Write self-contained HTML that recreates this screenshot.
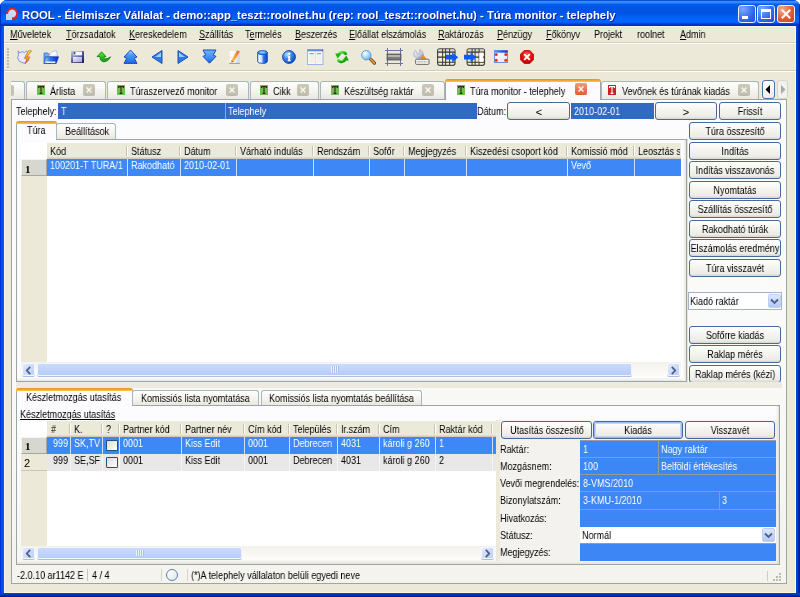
<!DOCTYPE html><html><head><meta charset="utf-8"><style>
*{box-sizing:border-box;margin:0;padding:0}
html,body{width:800px;height:597px;overflow:hidden;background:#fff}
body{font-family:"Liberation Sans",sans-serif;font-size:11px;color:#000;position:relative}
.a{position:absolute}
.t{position:absolute;white-space:nowrap;line-height:13px;transform-origin:0 0;will-change:transform}
.tcs{position:absolute;left:0;top:0;white-space:nowrap;line-height:13px;will-change:transform}
.btn{position:absolute;border:1px solid #47699C;border-radius:3px;background:linear-gradient(#FFFFFF 0,#F6F5F1 40%,#ECEBE5 85%,#D9D5C8 100%)}
.tab{position:absolute;border:1px solid #A8B6BE;border-bottom:none;border-radius:3px 3px 0 0;background:linear-gradient(#FFFFFF,#F3F2EC 60%,#E9E7DE)}
.tabA{position:absolute;border:1px solid #9CA6A8;border-bottom:none;border-top:none;border-radius:3px 3px 0 0;background:#FCFCFE}
.tabA:before{content:"";position:absolute;left:-1px;right:-1px;top:0;height:3px;background:linear-gradient(#E68B2C,#FFC73C);border-radius:3px 3px 0 0}
.w{color:#fff}
u{text-decoration:underline}
</style></head><body>
<div class="a" style="left:0;top:0;width:800px;height:597px;border-radius:7px 7px 0 0;overflow:hidden;background:linear-gradient(90deg,#0019CF 0,#0055E5 1px,#0055E5 3px,#0831D9 4px,#0831D9 796px,#0055E5 797px,#0032C0 798px,#001290 799px)">
<div class="a" style="left:0;top:0;width:800px;height:26px;background:linear-gradient(#0A4FD4 0px,#0A4FD4 1px,#3D93FF 1px,#2C84FA 3px,#0A5CEC 4px,#0057E6 6px,#0054E2 13px,#0062F6 17px,#0066FF 21px,#005CF4 23px,#0036C8 24px,#0030C0 26px)"></div>
<div class="a" style="left:0;top:26px;width:4px;height:571px;background:linear-gradient(90deg,#0010C8,#0048E0 1px,#0058EA 3px)"></div>
<div class="a" style="left:0;top:0;width:1px;height:26px;background:#0030C8"></div>
<div class="a" style="left:799px;top:0;width:1px;height:26px;background:#00209C"></div>
<div class="a" style="left:796px;top:26px;width:4px;height:571px;background:linear-gradient(90deg,#0050E0,#0034C8 2px,#00128C 4px)"></div>
<div class="a" style="left:0;top:593px;width:800px;height:4px;background:linear-gradient(#0048DC,#0030B8 2px,#00128C 4px)"></div>
</div>
<svg class="a" style="left:5px;top:7px" width="14" height="14" viewBox="0 0 14 14">
<circle cx="7" cy="6.5" r="4.6" fill="#CFDCF0"/>
<path d="M2.2 7.2 A5 5 0 1 1 7 11.6" fill="none" stroke="#E82020" stroke-width="2"/>
<rect x="1" y="7" width="6" height="6" fill="#C5D6F2"/>
</svg>
<div class="t" style="left:22px;top:8px;color:#fff;font-weight:bold;font-size:11.3px;line-height:15px;text-shadow:1px 1px 0 #0F1E8F;transform:none">ROOL - Élelmiszer Vállalat - demo::app_teszt::roolnet.hu (rep: rool_teszt::roolnet.hu) - Túra monitor - telephely</div>
<div class="a" style="left:738px;top:5px;width:18px;height:18px;border:1px solid #E8EEFA;border-radius:3px;background:radial-gradient(circle at 25% 20%,#7EA8FF,#2E68EE 60%,#1C50DA)"></div>
<div class="a" style="left:742px;top:16px;width:6px;height:3px;background:#fff"></div>
<div class="a" style="left:757px;top:5px;width:18px;height:18px;border:1px solid #E8EEFA;border-radius:3px;background:radial-gradient(circle at 25% 20%,#7EA8FF,#2E68EE 60%,#1C50DA)"></div>
<div class="a" style="left:761px;top:9px;width:10px;height:10px;border:1px solid #fff;border-top-width:3px"></div>
<div class="a" style="left:777px;top:5px;width:18px;height:18px;border:1px solid #F2F4FA;border-radius:3px;background:radial-gradient(circle at 25% 20%,#F4A888,#E2582E 60%,#D0441A)"></div>
<svg class="a" style="left:777px;top:5px" width="18" height="18"><path d="M4.8 4.8 L13.2 13.2 M13.2 4.8 L4.8 13.2" stroke="#fff" stroke-width="2"/></svg>
<div class="a" style="left:4px;top:26px;width:792px;height:567px;background:#ECE9D8;border:1px solid #FAF6E6"></div>
<div class="t" style="left:10px;top:27.69px;transform:scaleX(0.82);"><u>M</u>űveletek</div>
<div class="t" style="left:66px;top:27.69px;transform:scaleX(0.82);"><u>T</u>örzsadatok</div>
<div class="t" style="left:129px;top:27.69px;transform:scaleX(0.82);"><u>K</u>ereskedelem</div>
<div class="t" style="left:199px;top:27.69px;transform:scaleX(0.82);"><u>S</u>zállítás</div>
<div class="t" style="left:245px;top:27.69px;transform:scaleX(0.82);">T<u>e</u>rmelés</div>
<div class="t" style="left:295px;top:27.69px;transform:scaleX(0.82);"><u>B</u>eszerzés</div>
<div class="t" style="left:349px;top:27.69px;transform:scaleX(0.82);"><u>E</u>lőállat elszámolás</div>
<div class="t" style="left:438px;top:27.69px;transform:scaleX(0.82);"><u>R</u>aktározás</div>
<div class="t" style="left:497px;top:27.69px;transform:scaleX(0.82);"><u>P</u>énzügy</div>
<div class="t" style="left:546px;top:27.69px;transform:scaleX(0.82);"><u>F</u>őkönyv</div>
<div class="t" style="left:594px;top:27.69px;transform:scaleX(0.82);">Projekt</div>
<div class="t" style="left:637px;top:27.69px;transform:scaleX(0.82);">roolnet</div>
<div class="t" style="left:680px;top:27.69px;transform:scaleX(0.82);"><u>A</u>dmin</div>
<div class="a" style="left:4px;top:42px;width:792px;height:1px;background:#D4D0C0"></div>
<div class="a" style="left:4px;top:43px;width:792px;height:1px;background:#FFFFFF"></div>
<div class="a" style="left:7px;top:48px;width:2px;height:2px;background:#C1BDA8"></div>
<div class="a" style="left:7px;top:51px;width:2px;height:2px;background:#C1BDA8"></div>
<div class="a" style="left:7px;top:54px;width:2px;height:2px;background:#C1BDA8"></div>
<div class="a" style="left:7px;top:57px;width:2px;height:2px;background:#C1BDA8"></div>
<div class="a" style="left:7px;top:60px;width:2px;height:2px;background:#C1BDA8"></div>
<div class="a" style="left:7px;top:63px;width:2px;height:2px;background:#C1BDA8"></div>
<div class="a" style="left:7px;top:66px;width:2px;height:2px;background:#C1BDA8"></div>
<div class="a" style="left:4px;top:70px;width:792px;height:1px;background:#D0CCBC"></div>
<div class="a" style="left:4px;top:71px;width:792px;height:1px;background:#FFFFFF"></div>
<svg class="a" style="left:17px;top:50px" width="16" height="14" viewBox="0 0 16 14"><defs><linearGradient id="gl" x1="0" y1="0" x2="0" y2="1"><stop offset="0" stop-color="#FFE84A"/><stop offset=".5" stop-color="#F8A818"/><stop offset="1" stop-color="#E06010"/></linearGradient></defs><path d="M1.2 0.8 L2.6 3 L5.2 1.6 L7.6 2.8 L9.6 0.8 L10.8 3.8 L10.2 8 L12 10.2 L8.2 13.2 L5 12.6 L2 10.8 L0.6 7.8 L1.4 4.8 Z" fill="#E6EAFB" stroke="#7C8AD8" stroke-width=".9" stroke-linejoin="round"/><path d="M14.6 0.8 L10 6.6 L13 7.2 L8.2 13.8 L9.8 8.8 L7.4 8.3 L11.4 0.8 Z" fill="url(#gl)" stroke="#D0601A" stroke-width=".7" stroke-linejoin="round"/></svg>
<svg class="a" style="left:43px;top:50px" width="16" height="14" viewBox="0 0 16 14"><defs><linearGradient id="gfo" x1="0" y1="0" x2="1" y2="0"><stop offset="0" stop-color="#9CD0FF"/><stop offset=".45" stop-color="#2C74E8"/><stop offset="1" stop-color="#0624B8"/></linearGradient></defs><path d="M1 3 L5 3 L6 4.5 L8 4.5 L8 13.5 L1 13.5 Z" fill="#6CB0F4" stroke="#3A70D0" stroke-width=".8"/><path d="M5.5 6.5 L9 1.5 L13.5 0.8 L14.5 6 Z" fill="#FBFBFF" stroke="#A8A8D8" stroke-width=".7"/><path d="M2.5 6.8 L15.6 6.8 L13.2 13.5 L1 13.5 Z" fill="url(#gfo)" stroke="#1A40C0" stroke-width=".7"/><path d="M3 11.6 L12.6 11.6 L12.2 13 L2.4 13Z" fill="#E8F2FF"/></svg>
<svg class="a" style="left:71px;top:51px" width="13" height="12" viewBox="0 0 13 12"><defs><linearGradient id="gfl" x1="0" y1="0" x2="1" y2="1"><stop offset="0" stop-color="#C8CCF0"/><stop offset=".45" stop-color="#5A62A8"/><stop offset="1" stop-color="#10144A"/></linearGradient><linearGradient id="gfb" x1="0" y1="0" x2="1" y2="1"><stop offset="0" stop-color="#F2F0FF"/><stop offset="1" stop-color="#A0A0D2"/></linearGradient></defs><rect x="0" y="0" width="13" height="12" rx=".8" fill="url(#gfl)"/><rect x="2.4" y="0.6" width="8.6" height="3.8" fill="#F6F8FF"/><rect x="2.6" y="0.8" width="1.8" height="2.6" fill="#4A5498"/><rect x="2" y="5.8" width="9" height="5.4" fill="url(#gfb)"/></svg>
<svg class="a" style="left:96px;top:51px" width="16" height="12" viewBox="0 0 16 12"><defs><linearGradient id="ga" x1="0" y1="0" x2="0" y2="1"><stop offset="0" stop-color="#5CEB3C"/><stop offset="1" stop-color="#0E9A0A"/></linearGradient></defs><path d="M5.6 0.8 L10 5.6 L8 5.6 C8 8.6 11 8.4 14.5 5.8 C13.5 8.8 10.5 10.8 7.5 10.8 C5 10.6 4 8.2 4 5.6 L1 5.6 Z" fill="url(#ga)" stroke="#0B7A08" stroke-width=".8" stroke-linejoin="round"/></svg>
<svg class="a" style="left:123px;top:49px" width="15" height="15" viewBox="0 0 15 15"><defs><linearGradient id="gb" x1="0" y1="0" x2="0" y2="1"><stop offset="0" stop-color="#B8E0FF"/><stop offset=".35" stop-color="#4A9CF6"/><stop offset="1" stop-color="#1E66E0"/></linearGradient></defs><path d="M7.5 1 L14 8 L11.3 9.2 L14 14.4 L1 14.4 L3.7 9.2 L1 8 Z" fill="url(#gb)" stroke="#1A4CC0" stroke-width="1" stroke-linejoin="round"/></svg>
<svg class="a" style="left:151px;top:50px" width="12" height="14" viewBox="0 0 12 14"><path d="M11 0.5 L11 13.5 L1 7 Z" fill="#2F7AEB" stroke="#1C4FB8" stroke-linejoin="round"/><path d="M10 2.5 L10 7 L4 7 Z" fill="#9CCBFF"/></svg>
<svg class="a" style="left:177px;top:50px" width="12" height="14" viewBox="0 0 12 14"><path d="M1 0.5 L1 13.5 L11 7 Z" fill="#2F7AEB" stroke="#1C4FB8" stroke-linejoin="round"/><path d="M2 2.5 L2 7 L8 7 Z" fill="#9CCBFF"/></svg>
<svg class="a" style="left:202px;top:49px" width="15" height="15" viewBox="0 0 15 15"><defs><linearGradient id="gd" x1="0" y1="0" x2="0" y2="1"><stop offset="0" stop-color="#6CB4FF"/><stop offset=".6" stop-color="#3E8EF4"/><stop offset="1" stop-color="#1E5EDC"/></linearGradient></defs><path d="M1 1 L14 1 L11.3 6.2 L14 7.4 L7.5 14.2 L1 7.4 L3.7 6.2 Z" fill="url(#gd)" stroke="#1A4CC0" stroke-width="1" stroke-linejoin="round"/></svg>
<svg class="a" style="left:229px;top:50px" width="11" height="14" viewBox="0 0 11 14"><defs><linearGradient id="gpd" x1="0" y1="0" x2="1" y2="0"><stop offset="0" stop-color="#FFFFFF"/><stop offset=".5" stop-color="#F4F6FA"/><stop offset="1" stop-color="#C8CEDC"/></linearGradient><linearGradient id="gpp" x1="0" y1="0" x2="1" y2="0"><stop offset="0" stop-color="#FFD040"/><stop offset="1" stop-color="#F06010"/></linearGradient></defs><rect x="0.3" y="0.5" width="10.4" height="13" fill="url(#gpd)" stroke="#E2E4EC" stroke-width=".5"/><rect x="0.3" y="12.8" width="10.4" height="1.2" fill="#9CA2B0"/><path d="M8 0.4 L10.8 1.4 L4.8 11.4 L2.6 12.4 L2.4 10.2 Z" fill="url(#gpp)"/><path d="M2.4 10.2 L4.8 11.4 L2.6 12.4 Z" fill="#A06040"/></svg>
<svg class="a" style="left:257px;top:50px" width="11" height="14" viewBox="0 0 11 14"><defs><linearGradient id="gc" x1="0" y1="0" x2="1" y2="0"><stop offset="0" stop-color="#9CC8F8"/><stop offset=".2" stop-color="#F4FBFF"/><stop offset=".42" stop-color="#B8DEFA"/><stop offset=".62" stop-color="#2A70E2"/><stop offset="1" stop-color="#0C48C4"/></linearGradient></defs><path d="M0.6 2.6 V11.4 A4.9 2 0 0 0 10.4 11.4 V2.6 Z" fill="url(#gc)" stroke="#1E52BE" stroke-width=".9"/><ellipse cx="5.5" cy="2.6" rx="4.9" ry="2" fill="#3C8EF2" stroke="#1E52BE" stroke-width=".9"/><ellipse cx="5.2" cy="2.3" rx="3" ry="1" fill="#8CC4FF"/></svg>
<svg class="a" style="left:282px;top:50px" width="14" height="14" viewBox="0 0 14 14"><defs><radialGradient id="gi" cx=".35" cy=".3" r=".75"><stop offset="0" stop-color="#B8E0FF"/><stop offset=".45" stop-color="#3A8AF2"/><stop offset="1" stop-color="#0B48C0"/></radialGradient></defs><circle cx="7" cy="7" r="6.4" fill="url(#gi)" stroke="#0A3CA8" stroke-width=".9"/><circle cx="7.2" cy="3.7" r="1.2" fill="#fff"/><path d="M5.8 5.8 H8.2 V10.6 H9 V11.3 H5.4 V10.6 H6.2 V6.6 H5.8Z" fill="#fff"/></svg>
<svg class="a" style="left:307px;top:49px" width="17" height="16" viewBox="0 0 17 16"><rect x="0.5" y="0.5" width="15.5" height="15" fill="#FBFAF4" stroke="#9DB2E6" stroke-width="1"/><rect x="0.5" y="0.5" width="15.5" height="1.8" fill="#5C8AE2"/><rect x="15" y="0.5" width="1" height="1.8" fill="#B04070"/><path d="M8.2 2.5 V15" stroke="#DCD8CA" stroke-width="1"/><path d="M2.5 4.6 H6.8 M9.8 4.6 H14" stroke="#7EA2E6" stroke-width="1.2"/><rect x="2" y="6" width="5" height="8" fill="#F2F0E8"/><rect x="9.5" y="6" width="5" height="8" fill="#F2F0E8"/></svg>
<svg class="a" style="left:335px;top:50px" width="14" height="14" viewBox="0 0 14 14"><defs><linearGradient id="gr" x1="0" y1="0" x2="1" y2="1"><stop offset="0" stop-color="#7CF05C"/><stop offset=".5" stop-color="#22C018"/><stop offset="1" stop-color="#0A8A08"/></linearGradient></defs><path d="M11.2 4.8 C10 1.5 5.5 1 3.6 4.4" fill="none" stroke="url(#gr)" stroke-width="2.6"/><path d="M0.2 3.6 L6.6 3.6 L2.6 8.6 Z" fill="#1EB414"/><path d="M2.8 9.2 C4 12.5 8.5 13 10.4 9.6" fill="none" stroke="url(#gr)" stroke-width="2.6"/><path d="M13.8 10.4 L7.4 10.4 L11.4 5.4 Z" fill="#16A810"/></svg>
<svg class="a" style="left:361px;top:50px" width="15" height="15" viewBox="0 0 15 15"><defs><radialGradient id="gm" cx=".35" cy=".3" r=".7"><stop offset="0" stop-color="#FFFFFF"/><stop offset=".5" stop-color="#B6E2FF"/><stop offset="1" stop-color="#6EB4EE"/></radialGradient></defs><path d="M9.6 9.2 L13.4 13.2" stroke="#6A3A10" stroke-width="3.2" stroke-linecap="round"/><path d="M9.6 9.2 L13.4 13.2" stroke="#E89A3A" stroke-width="1.8" stroke-linecap="round"/><circle cx="5.3" cy="5.2" r="4.7" fill="url(#gm)" stroke="#5C9AD0" stroke-width=".9"/></svg>
<svg class="a" style="left:385px;top:48px" width="18" height="18" viewBox="0 0 18 18"><path d="M2.5 0 L2.5 18 M15.5 0 L15.5 18" stroke="#6A70B4" stroke-width="1"/><path d="M0 2.5 L18 2.5 M0 15.5 L18 15.5" stroke="#6A70B4"/><rect x="2" y="6" width="14" height="6" fill="#7C7C7C" stroke="#333" stroke-width=".6"/><rect x="3" y="7" width="12" height="2" fill="#B4B4B4"/></svg>
<svg class="a" style="left:413px;top:49px" width="17" height="16" viewBox="0 0 17 16"><defs><linearGradient id="gwr" x1="0" y1="0" x2="1" y2="1"><stop offset="0" stop-color="#FFFFFF"/><stop offset=".6" stop-color="#C8CCE4"/><stop offset="1" stop-color="#7078B0"/></linearGradient></defs><path d="M2.6 1.4 C0.4 2.8 0.2 6.4 2.2 8.2 C3.8 9.6 6.4 9.6 8 8.6 L9.6 9.6 L10.2 7.2 C10.6 4.2 9.4 1.6 6.8 0.6 L6.8 3.2 C6.6 4.8 5 5.4 3.8 4.4 Z" fill="url(#gwr)" stroke="#8C92C0" stroke-width=".6"/><path d="M6.6 10.2 L10.2 5.6 L13.6 10.2 Z" fill="#F49010"/><rect x="2.6" y="10.2" width="13.4" height="5.2" rx="1" fill="#F2F2F0" stroke="#6A6A6A" stroke-width="1"/><path d="M4.4 12.8 H14.2" stroke="#909090" stroke-width="1" stroke-dasharray="1 .6"/></svg>
<svg class="a" style="left:437px;top:48px" width="23" height="18" viewBox="0 0 23 18"><rect x="0.6" y="0.9" width="17.4" height="16.4" rx="2" fill="#F4EDCF" stroke="#4A4A48" stroke-width="1.2"/><rect x="1.2" y="1.5" width="16.2" height="2.6" fill="#DEDCD2"/><path d="M0.6 4.1 H18 M0.6 9.1 H18 M0.6 14.2 H18" stroke="#2E2E2E" stroke-width="1.1"/><path d="M5.6 1 V17 M8.6 1 V17 M12.6 1 V17" stroke="#3A3A3A" stroke-width="1"/><path d="M8.9 6.8 L15.2 6.8 L15.2 4.6 L21.2 9.3 L15.2 14.4 L15.2 11.6 L8.9 11.6 Z" fill="#0A5CFA"/></svg>
<svg class="a" style="left:464px;top:48px" width="23" height="18" viewBox="0 0 23 18"><rect x="3.1" y="0.9" width="17.4" height="16.4" rx="2" fill="#F4EDCF" stroke="#4A4A48" stroke-width="1.2"/><rect x="3.7" y="1.5" width="16.2" height="2.6" fill="#DEDCD2"/><path d="M3.1 4.1 H20.5 M3.1 9.1 H20.5 M3.1 14.2 H20.5" stroke="#2E2E2E" stroke-width="1.1"/><path d="M8.1 1 V17 M11.1 1 V17 M15.1 1 V17" stroke="#3A3A3A" stroke-width="1"/><rect x="15.3" y="4.6" width="3.8" height="9.2" fill="#FFFFFF"/><path d="M0 6.8 L6.6 6.8 L6.6 4.6 L12.2 9.3 L6.6 14.4 L6.6 11.6 L0 11.6 Z" fill="#0A5CFA"/></svg>
<svg class="a" style="left:494px;top:50px" width="14" height="13" viewBox="0 0 14 13"><defs><linearGradient id="gf" x1="0" y1="0" x2="1" y2="0"><stop offset="0" stop-color="#5C9CF4"/><stop offset="1" stop-color="#0A2ED8"/></linearGradient><linearGradient id="gw" x1="0" y1="0" x2="1" y2="1"><stop offset="0" stop-color="#FFFFFF"/><stop offset="1" stop-color="#DDE6F6"/></linearGradient></defs><rect x="0.5" y="0.5" width="13" height="12" fill="url(#gw)" stroke="#6A92D8"/><rect x="0.5" y="0.5" width="13" height="2.2" fill="url(#gf)"/><circle cx="2.2" cy="4.6" r="1.5" fill="#F0300A"/><circle cx="11.8" cy="4.6" r="1.5" fill="#F0300A"/><circle cx="2.2" cy="10.2" r="1.5" fill="#F0300A"/><circle cx="11.8" cy="10.2" r="1.5" fill="#F0300A"/></svg>
<svg class="a" style="left:520px;top:50px" width="14" height="14" viewBox="0 0 14 14"><defs><radialGradient id="gs" cx=".5" cy=".35" r=".7"><stop offset="0" stop-color="#FF7070"/><stop offset=".5" stop-color="#E81010"/><stop offset="1" stop-color="#B00000"/></radialGradient></defs><path d="M4.2 0.5 L9.8 0.5 L13.5 4.2 L13.5 9.8 L9.8 13.5 L4.2 13.5 L0.5 9.8 L0.5 4.2 Z" fill="url(#gs)" stroke="#B80A0A" stroke-width=".8"/><path d="M4.2 4.2 L9.8 9.8 M9.8 4.2 L4.2 9.8" stroke="#fff" stroke-width="1.9"/></svg>
<div class="a" style="left:11px;top:81px;width:14px;height:18px;border:1px solid #A8B6BE;border-left:none;border-bottom:none;border-radius:0 3px 0 0;background:linear-gradient(#FFFFFF,#F3F2EC 60%,#E9E7DE)"></div>
<div class="a" style="left:11px;top:85px;width:3px;height:11px;background:#C6C3B6;border-radius:0 2px 2px 0"></div>
<div class="tab" style="left:26px;top:81px;width:80px;height:18px"></div>
<svg class="a" style="left:37px;top:85px" width="8" height="10"><rect x="0" y="0" width="8" height="10" fill="#6CC050"/><path d="M1.5 1.6 H6.5 V3 M1.5 1.6 V3 M4 1.6 V8.4 M2.6 8.4 H5.4" stroke="#3A2418" stroke-width="1.1" fill="none"/></svg>
<div class="t" style="left:50px;top:84.69px;transform:scaleX(0.82);">Árlista</div>
<div class="a" style="left:83px;top:84px;width:12px;height:12px;border-radius:2px;background:linear-gradient(#CDC9BA,#BFBBAC)"></div>
<svg class="a" style="left:83px;top:84px" width="12" height="12"><path d="M3.6 3.6 L8.4 8.4 M8.4 3.6 L3.6 8.4" stroke="#FAF8F0" stroke-width="1.4"/></svg>
<div class="tab" style="left:107px;top:81px;width:142px;height:18px"></div>
<svg class="a" style="left:117px;top:85px" width="8" height="10"><rect x="0" y="0" width="8" height="10" fill="#6CC050"/><path d="M1.5 1.6 H6.5 V3 M1.5 1.6 V3 M4 1.6 V8.4 M2.6 8.4 H5.4" stroke="#3A2418" stroke-width="1.1" fill="none"/></svg>
<div class="t" style="left:130px;top:84.69px;transform:scaleX(0.82);">Túraszervező monitor</div>
<div class="a" style="left:226px;top:84px;width:12px;height:12px;border-radius:2px;background:linear-gradient(#CDC9BA,#BFBBAC)"></div>
<svg class="a" style="left:226px;top:84px" width="12" height="12"><path d="M3.6 3.6 L8.4 8.4 M8.4 3.6 L3.6 8.4" stroke="#FAF8F0" stroke-width="1.4"/></svg>
<div class="tab" style="left:250px;top:81px;width:69px;height:18px"></div>
<svg class="a" style="left:260px;top:85px" width="8" height="10"><rect x="0" y="0" width="8" height="10" fill="#6CC050"/><path d="M1.5 1.6 H6.5 V3 M1.5 1.6 V3 M4 1.6 V8.4 M2.6 8.4 H5.4" stroke="#3A2418" stroke-width="1.1" fill="none"/></svg>
<div class="t" style="left:273px;top:84.69px;transform:scaleX(0.82);">Cikk</div>
<div class="a" style="left:297px;top:84px;width:12px;height:12px;border-radius:2px;background:linear-gradient(#CDC9BA,#BFBBAC)"></div>
<svg class="a" style="left:297px;top:84px" width="12" height="12"><path d="M3.6 3.6 L8.4 8.4 M8.4 3.6 L3.6 8.4" stroke="#FAF8F0" stroke-width="1.4"/></svg>
<div class="tab" style="left:320px;top:81px;width:125px;height:18px"></div>
<svg class="a" style="left:331px;top:85px" width="8" height="10"><rect x="0" y="0" width="8" height="10" fill="#6CC050"/><path d="M1.5 1.6 H6.5 V3 M1.5 1.6 V3 M4 1.6 V8.4 M2.6 8.4 H5.4" stroke="#3A2418" stroke-width="1.1" fill="none"/></svg>
<div class="t" style="left:344px;top:84.69px;transform:scaleX(0.82);">Készültség raktár</div>
<div class="a" style="left:422px;top:84px;width:12px;height:12px;border-radius:2px;background:linear-gradient(#CDC9BA,#BFBBAC)"></div>
<svg class="a" style="left:422px;top:84px" width="12" height="12"><path d="M3.6 3.6 L8.4 8.4 M8.4 3.6 L3.6 8.4" stroke="#FAF8F0" stroke-width="1.4"/></svg>
<div class="tab" style="left:601px;top:81px;width:158px;height:18px"></div>
<svg class="a" style="left:608px;top:85px" width="8" height="10"><rect x="0" y="0" width="8" height="10" fill="#C42424"/><path d="M1.5 1.6 H6.5 V3 M1.5 1.6 V3 M4 1.6 V8.4 M2.6 8.4 H5.4" stroke="#FFFFFF" stroke-width="1.1" fill="none"/></svg>
<div class="t" style="left:622px;top:84.69px;transform:scaleX(0.82);">Vevőnek és túrának kiadás</div>
<div class="a" style="left:738px;top:84px;width:12px;height:12px;border-radius:2px;background:linear-gradient(#CDC9BA,#BFBBAC)"></div>
<svg class="a" style="left:738px;top:84px" width="12" height="12"><path d="M3.6 3.6 L8.4 8.4 M8.4 3.6 L3.6 8.4" stroke="#FAF8F0" stroke-width="1.4"/></svg>
<div class="a" style="left:11px;top:99px;width:776px;height:485px;border:1px solid #9CA6A8;border-top-color:#9CA6A8;background:linear-gradient(#FCFCFE 0,#FAFAF8 50%,#F4F3EE 100%)"></div>
<div class="tabA" style="left:445px;top:79px;width:156px;height:21px"></div>
<svg class="a" style="left:457px;top:85px" width="8" height="10"><rect x="0" y="0" width="8" height="10" fill="#6CC050"/><path d="M1.5 1.6 H6.5 V3 M1.5 1.6 V3 M4 1.6 V8.4 M2.6 8.4 H5.4" stroke="#3A2418" stroke-width="1.1" fill="none"/></svg>
<div class="t" style="left:470px;top:84.69px;transform:scaleX(0.82);">Túra monitor - telephely</div>
<div class="a" style="left:575px;top:83px;width:12px;height:12px;border-radius:2px;background:linear-gradient(#F29A7C,#E25A34)"></div>
<svg class="a" style="left:575px;top:83px" width="12" height="12"><path d="M3.6 3.6 L8.4 8.4 M8.4 3.6 L3.6 8.4" stroke="#FAF8F0" stroke-width="1.4"/></svg>
<div class="a" style="left:762px;top:80px;width:13px;height:19px;border:1px solid #4A72AA;border-radius:3px;background:linear-gradient(#FFFFFF,#EDEBE3)"></div>
<svg class="a" style="left:765px;top:85px" width="6" height="9" viewBox="0 0 6 9"><path d="M5 0 L5 9 L0.5 4.5Z" fill="#000"/></svg>
<div class="a" style="left:777px;top:80px;width:11px;height:19px;border:1px solid #D6D4CC;border-radius:3px;background:#F2F1EC"></div>
<svg class="a" style="left:780px;top:85px" width="6" height="9" viewBox="0 0 6 9"><path d="M1 0 L1 9 L5.5 4.5Z" fill="#A8A7A0"/></svg>
<div class="t" style="left:16px;top:104.69px;transform:scaleX(0.82);">Telephely:</div>
<div class="a" style="left:58px;top:103px;width:419px;height:16px;background:#316AC5"></div>
<div class="a" style="left:225px;top:103px;width:1px;height:16px;background:#8DA9D8"></div>
<div class="t w" style="left:61px;top:104.69px;transform:scaleX(0.82);">T</div>
<div class="t w" style="left:228px;top:104.69px;transform:scaleX(0.82);">Telephely</div>
<div class="t" style="left:477px;top:104.69px;transform:scaleX(0.82);">Dátum:</div>
<div class="btn" style="left:507px;top:102px;width:63px;height:18px"></div>
<div class="a" style="left:538.5px;top:105.69px;width:0;height:13px;"><span class="tcs" style="transform:translateX(-50%) scaleX(1)">&lt;</span></div>
<div class="a" style="left:571px;top:103px;width:83px;height:16px;background:#316AC5"></div>
<div class="t w" style="left:574px;top:104.69px;transform:scaleX(0.82);">2010-02-01</div>
<div class="btn" style="left:655px;top:102px;width:62px;height:18px"></div>
<div class="a" style="left:686.0px;top:105.69px;width:0;height:13px;"><span class="tcs" style="transform:translateX(-50%) scaleX(1)">&gt;</span></div>
<div class="btn" style="left:719px;top:102px;width:62px;height:18px"></div>
<div class="a" style="left:750.0px;top:104.69px;width:0;height:13px;"><span class="tcs" style="transform:translateX(-50%) scaleX(0.82)">Frissít</span></div>
<div class="a" style="left:16px;top:139px;width:671px;height:243px;border:1px solid #9CA6A8;background:#FCFCFE"></div>
<div class="a" style="left:683px;top:140px;width:3px;height:241px;background:linear-gradient(90deg,rgba(236,233,216,0),#E6E4DA)"></div>
<div class="a" style="left:17px;top:378px;width:666px;height:3px;background:linear-gradient(rgba(236,233,216,0),#E6E4DA)"></div>
<div class="a" style="left:687px;top:139px;width:1px;height:243px;background:#E6E2D2"></div>
<div class="tabA" style="left:16px;top:121px;width:41px;height:19px"></div>
<div class="t" style="left:27px;top:123.69px;transform:scaleX(0.82);">Túra</div>
<div class="tab" style="left:56px;top:123px;width:60px;height:16px"></div>
<div class="t" style="left:65px;top:124.69px;transform:scaleX(0.82);">Beállítások</div>
<div class="a" style="left:21px;top:143px;width:660px;height:219px;background:#FFFFFF"></div>
<div class="a" style="left:47px;top:143px;width:634px;height:14px;background:#EBEAD9"></div>
<div class="a" style="left:47px;top:157px;width:634px;height:1px;background:#E0DCCB"></div>
<div class="a" style="left:47px;top:158px;width:634px;height:1px;background:#D2CEBC"></div>
<div class="a" style="left:47px;top:143px;width:79px;height:15px;overflow:hidden"><div class="t" style="left:3px;top:1.69px;transform:scaleX(0.82)">Kód</div></div>
<div class="a" style="left:126px;top:146px;width:1px;height:10px;background:#C7C5B2"></div>
<div class="a" style="left:127px;top:146px;width:1px;height:10px;background:#FFFFFF"></div>
<div class="a" style="left:127px;top:143px;width:52px;height:15px;overflow:hidden"><div class="t" style="left:4px;top:1.69px;transform:scaleX(0.82)">Státusz</div></div>
<div class="a" style="left:179px;top:146px;width:1px;height:10px;background:#C7C5B2"></div>
<div class="a" style="left:180px;top:146px;width:1px;height:10px;background:#FFFFFF"></div>
<div class="a" style="left:180px;top:143px;width:55px;height:15px;overflow:hidden"><div class="t" style="left:4px;top:1.69px;transform:scaleX(0.82)">Dátum</div></div>
<div class="a" style="left:235px;top:146px;width:1px;height:10px;background:#C7C5B2"></div>
<div class="a" style="left:236px;top:146px;width:1px;height:10px;background:#FFFFFF"></div>
<div class="a" style="left:236px;top:143px;width:76px;height:15px;overflow:hidden"><div class="t" style="left:4px;top:1.69px;transform:scaleX(0.82)">Várható indulás</div></div>
<div class="a" style="left:312px;top:146px;width:1px;height:10px;background:#C7C5B2"></div>
<div class="a" style="left:313px;top:146px;width:1px;height:10px;background:#FFFFFF"></div>
<div class="a" style="left:313px;top:143px;width:55px;height:15px;overflow:hidden"><div class="t" style="left:4px;top:1.69px;transform:scaleX(0.82)">Rendszám</div></div>
<div class="a" style="left:368px;top:146px;width:1px;height:10px;background:#C7C5B2"></div>
<div class="a" style="left:369px;top:146px;width:1px;height:10px;background:#FFFFFF"></div>
<div class="a" style="left:369px;top:143px;width:34px;height:15px;overflow:hidden"><div class="t" style="left:4px;top:1.69px;transform:scaleX(0.82)">Sofőr</div></div>
<div class="a" style="left:403px;top:146px;width:1px;height:10px;background:#C7C5B2"></div>
<div class="a" style="left:404px;top:146px;width:1px;height:10px;background:#FFFFFF"></div>
<div class="a" style="left:404px;top:143px;width:61px;height:15px;overflow:hidden"><div class="t" style="left:4px;top:1.69px;transform:scaleX(0.82)">Megjegyzés</div></div>
<div class="a" style="left:465px;top:146px;width:1px;height:10px;background:#C7C5B2"></div>
<div class="a" style="left:466px;top:146px;width:1px;height:10px;background:#FFFFFF"></div>
<div class="a" style="left:466px;top:143px;width:100px;height:15px;overflow:hidden"><div class="t" style="left:4px;top:1.69px;transform:scaleX(0.82)">Kiszedési csoport kód</div></div>
<div class="a" style="left:566px;top:146px;width:1px;height:10px;background:#C7C5B2"></div>
<div class="a" style="left:567px;top:146px;width:1px;height:10px;background:#FFFFFF"></div>
<div class="a" style="left:567px;top:143px;width:66px;height:15px;overflow:hidden"><div class="t" style="left:4px;top:1.69px;transform:scaleX(0.82)">Komissió mód</div></div>
<div class="a" style="left:633px;top:146px;width:1px;height:10px;background:#C7C5B2"></div>
<div class="a" style="left:634px;top:146px;width:1px;height:10px;background:#FFFFFF"></div>
<div class="a" style="left:634px;top:143px;width:46px;height:15px;overflow:hidden"><div class="t" style="left:4px;top:1.69px;transform:scaleX(0.82)">Leosztás s</div></div>
<div class="a" style="left:47px;top:159px;width:634px;height:17px;background:#3D88F6"></div>
<div class="a" style="left:127px;top:159px;width:1px;height:17px;background:#CFE0FA"></div>
<div class="a" style="left:180px;top:159px;width:1px;height:17px;background:#CFE0FA"></div>
<div class="a" style="left:236px;top:159px;width:1px;height:17px;background:#CFE0FA"></div>
<div class="a" style="left:313px;top:159px;width:1px;height:17px;background:#CFE0FA"></div>
<div class="a" style="left:369px;top:159px;width:1px;height:17px;background:#CFE0FA"></div>
<div class="a" style="left:404px;top:159px;width:1px;height:17px;background:#CFE0FA"></div>
<div class="a" style="left:466px;top:159px;width:1px;height:17px;background:#CFE0FA"></div>
<div class="a" style="left:567px;top:159px;width:1px;height:17px;background:#CFE0FA"></div>
<div class="a" style="left:634px;top:159px;width:1px;height:17px;background:#CFE0FA"></div>
<div class="t w" style="left:50px;top:158.69px;transform:scaleX(0.82);">100201-T TURA/1</div>
<div class="t w" style="left:130.5px;top:158.69px;transform:scaleX(0.82);">Rakodható</div>
<div class="t w" style="left:183.5px;top:158.69px;transform:scaleX(0.82);">2010-02-01</div>
<div class="t w" style="left:570.5px;top:158.69px;transform:scaleX(0.82);">Vevő</div>
<div class="a" style="left:21px;top:176px;width:26px;height:186px;background:#ECE9D8"></div>
<div class="a" style="left:21px;top:159px;width:26px;height:17px;background:#D8D7CF;border:1px solid #F4F3EE;border-right-color:#A9A79C;border-bottom-color:#A9A79C"></div>
<div class="a" style="left:25px;top:162px;font-family:&quot;Liberation Serif&quot;,serif;font-weight:bold;font-size:11px;line-height:14px;will-change:transform">1</div>
<div class="a" style="left:21px;top:362px;width:660px;height:15px;background:linear-gradient(#F3F1EA,#FDFDFA)"></div>
<div class="a" style="left:22px;top:363px;width:13px;height:13px;border-radius:2px;background:linear-gradient(135deg,#E2EBFE,#B9CDF8);border:1px solid #F6F8FE;box-shadow:0 1px 0 #A8BDE8"></div>
<svg class="a" style="left:25px;top:366px" width="7" height="9" viewBox="0 0 7 9"><path d="M5.2 0.8 L1.8 4.5 L5.2 8.2" fill="none" stroke="#4D6185" stroke-width="1.8"/></svg>
<div class="a" style="left:37px;top:363px;width:595px;height:13px;border-radius:2px;background:linear-gradient(#CCDBFC,#B6CCF8);border:1px solid #F2F5FE;box-shadow:0 1px 0 #A8BDE8"></div>
<div class="a" style="left:331px;top:366px;width:1px;height:7px;background:#EEF4FE"></div>
<div class="a" style="left:332px;top:366px;width:1px;height:7px;background:#A9C0EE"></div>
<div class="a" style="left:333px;top:366px;width:1px;height:7px;background:#EEF4FE"></div>
<div class="a" style="left:334px;top:366px;width:1px;height:7px;background:#A9C0EE"></div>
<div class="a" style="left:335px;top:366px;width:1px;height:7px;background:#EEF4FE"></div>
<div class="a" style="left:336px;top:366px;width:1px;height:7px;background:#A9C0EE"></div>
<div class="a" style="left:337px;top:366px;width:1px;height:7px;background:#EEF4FE"></div>
<div class="a" style="left:338px;top:366px;width:1px;height:7px;background:#A9C0EE"></div>
<div class="a" style="left:667px;top:363px;width:13px;height:13px;border-radius:2px;background:linear-gradient(135deg,#E2EBFE,#B9CDF8);border:1px solid #F6F8FE;box-shadow:0 1px 0 #A8BDE8"></div>
<svg class="a" style="left:670px;top:366px" width="7" height="9" viewBox="0 0 7 9"><path d="M1.8 0.8 L5.2 4.5 L1.8 8.2" fill="none" stroke="#4D6185" stroke-width="1.8"/></svg>
<div class="btn" style="left:689px;top:122px;width:92px;height:18px"></div>
<div class="a" style="left:735.0px;top:124.69px;width:0;height:13px;"><span class="tcs" style="transform:translateX(-50%) scaleX(0.82)">Túra összesítő</span></div>
<div class="btn" style="left:689px;top:142px;width:92px;height:18px"></div>
<div class="a" style="left:735.0px;top:144.69px;width:0;height:13px;"><span class="tcs" style="transform:translateX(-50%) scaleX(0.82)">Indítás</span></div>
<div class="btn" style="left:689px;top:161px;width:92px;height:18px"></div>
<div class="a" style="left:735.0px;top:163.69px;width:0;height:13px;"><span class="tcs" style="transform:translateX(-50%) scaleX(0.82)">Indítás visszavonás</span></div>
<div class="btn" style="left:689px;top:181px;width:92px;height:18px"></div>
<div class="a" style="left:735.0px;top:183.69px;width:0;height:13px;"><span class="tcs" style="transform:translateX(-50%) scaleX(0.82)">Nyomtatás</span></div>
<div class="btn" style="left:689px;top:200px;width:92px;height:18px"></div>
<div class="a" style="left:735.0px;top:202.69px;width:0;height:13px;"><span class="tcs" style="transform:translateX(-50%) scaleX(0.82)">Szállítás összesítő</span></div>
<div class="btn" style="left:689px;top:220px;width:92px;height:18px"></div>
<div class="a" style="left:735.0px;top:222.69px;width:0;height:13px;"><span class="tcs" style="transform:translateX(-50%) scaleX(0.82)">Rakodható túrák</span></div>
<div class="btn" style="left:689px;top:239px;width:92px;height:18px"></div>
<div class="a" style="left:735.0px;top:241.69px;width:0;height:13px;"><span class="tcs" style="transform:translateX(-50%) scaleX(0.82)">Elszámolás eredmény</span></div>
<div class="btn" style="left:689px;top:259px;width:92px;height:18px"></div>
<div class="a" style="left:735.0px;top:261.69px;width:0;height:13px;"><span class="tcs" style="transform:translateX(-50%) scaleX(0.82)">Túra visszavét</span></div>
<div class="btn" style="left:689px;top:326px;width:92px;height:18px"></div>
<div class="a" style="left:735.0px;top:328.69px;width:0;height:13px;"><span class="tcs" style="transform:translateX(-50%) scaleX(0.82)">Sofőrre kiadás</span></div>
<div class="btn" style="left:689px;top:345px;width:92px;height:18px"></div>
<div class="a" style="left:735.0px;top:347.69px;width:0;height:13px;"><span class="tcs" style="transform:translateX(-50%) scaleX(0.82)">Raklap mérés</span></div>
<div class="btn" style="left:689px;top:365px;width:92px;height:18px"></div>
<div class="a" style="left:735.0px;top:367.69px;width:0;height:13px;"><span class="tcs" style="transform:translateX(-50%) scaleX(0.82)">Raklap mérés (kézi)</span></div>
<div class="a" style="left:688px;top:292px;width:94px;height:18px;background:#fff;border:1px solid #A2B4C8"></div>
<div class="t" style="left:690px;top:294.69px;transform:scaleX(0.82);">Kiadó raktár</div>
<div class="a" style="left:768px;top:294px;width:13px;height:14px;border-radius:2px;background:linear-gradient(#DCE6FC,#B4C8F6);border:1px solid #BCD0F6"></div>
<svg class="a" style="left:770px;top:298px" width="9" height="7" viewBox="0 0 9 7"><path d="M1 1.5 L4.5 5 L8 1.5" fill="none" stroke="#4D6185" stroke-width="1.8"/></svg>
<div class="a" style="left:16px;top:382px;width:766px;height:6px;background:#EDEADF"></div>
<div class="a" style="left:16px;top:405px;width:764px;height:160px;border:1px solid #9CA6A8;background:linear-gradient(#FCFCFE,#F6F6F2)"></div>
<div class="tabA" style="left:16px;top:388px;width:117px;height:18px"></div>
<div class="t" style="left:26px;top:390.69px;transform:scaleX(0.82);">Készletmozgás utasítás</div>
<div class="tab" style="left:132px;top:390px;width:127px;height:15px"></div>
<div class="t" style="left:141px;top:391.69px;transform:scaleX(0.82);">Komissiós lista nyomtatása</div>
<div class="tab" style="left:261px;top:390px;width:161px;height:15px"></div>
<div class="t" style="left:269px;top:391.69px;transform:scaleX(0.82);">Komissiós lista nyomtatás beállítása</div>
<div class="t" style="left:20px;top:407.69px;transform:scaleX(0.82);"><u>Készletmozgás utasítás</u></div>
<div class="a" style="left:21px;top:421px;width:475px;height:125px;background:#FFFFFF"></div>
<div class="a" style="left:47px;top:421px;width:449px;height:14px;background:#EBEAD9"></div>
<div class="a" style="left:47px;top:435px;width:449px;height:1px;background:#E0DCCB"></div>
<div class="a" style="left:47px;top:436px;width:449px;height:1px;background:#D2CEBC"></div>
<div class="t" style="left:50.5px;top:422.69px;transform:scaleX(0.82);">#</div>
<div class="a" style="left:69px;top:424px;width:1px;height:10px;background:#C7C5B2"></div>
<div class="a" style="left:70px;top:424px;width:1px;height:10px;background:#FFFFFF"></div>
<div class="t" style="left:74px;top:422.69px;transform:scaleX(0.82);">K.</div>
<div class="a" style="left:101px;top:424px;width:1px;height:10px;background:#C7C5B2"></div>
<div class="a" style="left:102px;top:424px;width:1px;height:10px;background:#FFFFFF"></div>
<div class="t" style="left:106px;top:422.69px;transform:scaleX(0.82);">?</div>
<div class="a" style="left:118px;top:424px;width:1px;height:10px;background:#C7C5B2"></div>
<div class="a" style="left:119px;top:424px;width:1px;height:10px;background:#FFFFFF"></div>
<div class="t" style="left:123px;top:422.69px;transform:scaleX(0.82);">Partner kód</div>
<div class="a" style="left:180px;top:424px;width:1px;height:10px;background:#C7C5B2"></div>
<div class="a" style="left:181px;top:424px;width:1px;height:10px;background:#FFFFFF"></div>
<div class="t" style="left:185px;top:422.69px;transform:scaleX(0.82);">Partner név</div>
<div class="a" style="left:243px;top:424px;width:1px;height:10px;background:#C7C5B2"></div>
<div class="a" style="left:244px;top:424px;width:1px;height:10px;background:#FFFFFF"></div>
<div class="t" style="left:248px;top:422.69px;transform:scaleX(0.82);">Cím kód</div>
<div class="a" style="left:288px;top:424px;width:1px;height:10px;background:#C7C5B2"></div>
<div class="a" style="left:289px;top:424px;width:1px;height:10px;background:#FFFFFF"></div>
<div class="t" style="left:293px;top:422.69px;transform:scaleX(0.82);">Település</div>
<div class="a" style="left:336px;top:424px;width:1px;height:10px;background:#C7C5B2"></div>
<div class="a" style="left:337px;top:424px;width:1px;height:10px;background:#FFFFFF"></div>
<div class="t" style="left:341px;top:422.69px;transform:scaleX(0.82);">Ir.szám</div>
<div class="a" style="left:378px;top:424px;width:1px;height:10px;background:#C7C5B2"></div>
<div class="a" style="left:379px;top:424px;width:1px;height:10px;background:#FFFFFF"></div>
<div class="t" style="left:383px;top:422.69px;transform:scaleX(0.82);">Cím</div>
<div class="a" style="left:434px;top:424px;width:1px;height:10px;background:#C7C5B2"></div>
<div class="a" style="left:435px;top:424px;width:1px;height:10px;background:#FFFFFF"></div>
<div class="t" style="left:439px;top:422.69px;transform:scaleX(0.82);">Raktár kód</div>
<div class="a" style="left:491px;top:424px;width:1px;height:10px;background:#C7C5B2"></div>
<div class="a" style="left:492px;top:424px;width:1px;height:10px;background:#FFFFFF"></div>
<div class="a" style="left:47px;top:437px;width:449px;height:17px;background:#3D88F6"></div>
<div class="a" style="left:47px;top:454px;width:449px;height:17px;background:#E8E8E8"></div>
<div class="a" style="left:70px;top:437px;width:1px;height:17px;background:#CFE0FA"></div>
<div class="a" style="left:70px;top:454px;width:1px;height:17px;background:#F6F6F6"></div>
<div class="a" style="left:102px;top:437px;width:1px;height:17px;background:#CFE0FA"></div>
<div class="a" style="left:102px;top:454px;width:1px;height:17px;background:#F6F6F6"></div>
<div class="a" style="left:119px;top:437px;width:1px;height:17px;background:#CFE0FA"></div>
<div class="a" style="left:119px;top:454px;width:1px;height:17px;background:#F6F6F6"></div>
<div class="a" style="left:181px;top:437px;width:1px;height:17px;background:#CFE0FA"></div>
<div class="a" style="left:181px;top:454px;width:1px;height:17px;background:#F6F6F6"></div>
<div class="a" style="left:244px;top:437px;width:1px;height:17px;background:#CFE0FA"></div>
<div class="a" style="left:244px;top:454px;width:1px;height:17px;background:#F6F6F6"></div>
<div class="a" style="left:289px;top:437px;width:1px;height:17px;background:#CFE0FA"></div>
<div class="a" style="left:289px;top:454px;width:1px;height:17px;background:#F6F6F6"></div>
<div class="a" style="left:337px;top:437px;width:1px;height:17px;background:#CFE0FA"></div>
<div class="a" style="left:337px;top:454px;width:1px;height:17px;background:#F6F6F6"></div>
<div class="a" style="left:379px;top:437px;width:1px;height:17px;background:#CFE0FA"></div>
<div class="a" style="left:379px;top:454px;width:1px;height:17px;background:#F6F6F6"></div>
<div class="a" style="left:435px;top:437px;width:1px;height:17px;background:#CFE0FA"></div>
<div class="a" style="left:435px;top:454px;width:1px;height:17px;background:#F6F6F6"></div>
<div class="a" style="left:492px;top:437px;width:1px;height:17px;background:#CFE0FA"></div>
<div class="a" style="left:492px;top:454px;width:1px;height:17px;background:#F6F6F6"></div>
<div class="t w" style="left:73.5px;top:436.69px;transform:scaleX(0.82);">SK,TV</div>
<div class="t w" style="left:122.5px;top:436.69px;transform:scaleX(0.82);">0001</div>
<div class="t w" style="left:184.5px;top:436.69px;transform:scaleX(0.82);">Kiss Edit</div>
<div class="t w" style="left:247.5px;top:436.69px;transform:scaleX(0.82);">0001</div>
<div class="t w" style="left:292.5px;top:436.69px;transform:scaleX(0.82);">Debrecen</div>
<div class="t w" style="left:340.5px;top:436.69px;transform:scaleX(0.82);">4031</div>
<div class="t w" style="left:382.5px;top:436.69px;transform:scaleX(0.82);">károli g 260</div>
<div class="t w" style="left:438.5px;top:436.69px;transform:scaleX(0.82);">1</div>
<div class="t" style="left:73.5px;top:453.69px;transform:scaleX(0.82);">SE,SF</div>
<div class="t" style="left:122.5px;top:453.69px;transform:scaleX(0.82);">0001</div>
<div class="t" style="left:184.5px;top:453.69px;transform:scaleX(0.82);">Kiss Edit</div>
<div class="t" style="left:247.5px;top:453.69px;transform:scaleX(0.82);">0001</div>
<div class="t" style="left:292.5px;top:453.69px;transform:scaleX(0.82);">Debrecen</div>
<div class="t" style="left:340.5px;top:453.69px;transform:scaleX(0.82);">4031</div>
<div class="t" style="left:382.5px;top:453.69px;transform:scaleX(0.82);">károli g 260</div>
<div class="t" style="left:438.5px;top:453.69px;transform:scaleX(0.82);">2</div>
<div class="t w" style="left:52.5px;top:436.69px;transform:scaleX(0.82);">999</div>
<div class="t" style="left:52.5px;top:453.69px;transform:scaleX(0.82);">999</div>
<div class="a" style="left:106px;top:440px;width:12px;height:11px;background:linear-gradient(135deg,#DCDBD2,#FFFFFF);border:1.5px solid #1C5180;border-radius:1px"></div>
<div class="a" style="left:106px;top:457px;width:12px;height:11px;background:linear-gradient(135deg,#DCDBD2,#FFFFFF);border:1.5px solid #1C5180;border-radius:1px"></div>
<div class="a" style="left:21px;top:471px;width:26px;height:75px;background:#ECE9D8"></div>
<div class="a" style="left:21px;top:454px;width:26px;height:17px;background:#ECE9D8;border-bottom:1px solid #CBC7B8"></div>
<div class="a" style="left:21px;top:437px;width:26px;height:17px;background:#D8D7CF;border:1px solid #F4F3EE;border-right-color:#A9A79C;border-bottom-color:#A9A79C"></div>
<div class="a" style="left:25px;top:439px;font-family:&quot;Liberation Serif&quot;,serif;font-weight:bold;font-size:11px;line-height:14px;will-change:transform">1</div>
<div class="t" style="left:24px;top:456.69px;transform:scaleX(1);">2</div>
<div class="a" style="left:21px;top:546px;width:474px;height:14px;background:linear-gradient(#F3F1EA,#FDFDFA)"></div>
<div class="a" style="left:22px;top:547px;width:13px;height:12px;border-radius:2px;background:linear-gradient(135deg,#E2EBFE,#B9CDF8);border:1px solid #F6F8FE;box-shadow:0 1px 0 #A8BDE8"></div>
<svg class="a" style="left:25px;top:549px" width="7" height="9" viewBox="0 0 7 9"><path d="M5.2 0.8 L1.8 4.5 L5.2 8.2" fill="none" stroke="#4D6185" stroke-width="1.8"/></svg>
<div class="a" style="left:37px;top:547px;width:205px;height:12px;border-radius:2px;background:linear-gradient(#CCDBFC,#B6CCF8);border:1px solid #F2F5FE;box-shadow:0 1px 0 #A8BDE8"></div>
<div class="a" style="left:136px;top:550px;width:1px;height:6px;background:#EEF4FE"></div>
<div class="a" style="left:137px;top:550px;width:1px;height:6px;background:#A9C0EE"></div>
<div class="a" style="left:138px;top:550px;width:1px;height:6px;background:#EEF4FE"></div>
<div class="a" style="left:139px;top:550px;width:1px;height:6px;background:#A9C0EE"></div>
<div class="a" style="left:140px;top:550px;width:1px;height:6px;background:#EEF4FE"></div>
<div class="a" style="left:141px;top:550px;width:1px;height:6px;background:#A9C0EE"></div>
<div class="a" style="left:142px;top:550px;width:1px;height:6px;background:#EEF4FE"></div>
<div class="a" style="left:143px;top:550px;width:1px;height:6px;background:#A9C0EE"></div>
<div class="a" style="left:481px;top:547px;width:13px;height:12px;border-radius:2px;background:linear-gradient(135deg,#E2EBFE,#B9CDF8);border:1px solid #F6F8FE;box-shadow:0 1px 0 #A8BDE8"></div>
<svg class="a" style="left:484px;top:549px" width="7" height="9" viewBox="0 0 7 9"><path d="M1.8 0.8 L5.2 4.5 L1.8 8.2" fill="none" stroke="#4D6185" stroke-width="1.8"/></svg>
<div class="a" style="left:496px;top:420px;width:4px;height:141px;background:#ECE9D8"></div>
<div class="a" style="left:500px;top:420px;width:278px;height:141px;background:#F3F2EE"></div>
<div class="btn" style="left:501px;top:421px;width:91px;height:18px"></div>
<div class="a" style="left:546.5px;top:423.69px;width:0;height:13px;"><span class="tcs" style="transform:translateX(-50%) scaleX(0.82)">Utasítás összesítő</span></div>
<div class="btn" style="left:593px;top:421px;width:90px;height:18px"></div>
<div class="a" style="left:638.0px;top:423.69px;width:0;height:13px;"><span class="tcs" style="transform:translateX(-50%) scaleX(0.82)">Kiadás</span></div>
<div class="a" style="left:594px;top:422px;width:88px;height:16px;border:1px solid #98B8EC;border-radius:2px;box-shadow:inset 0 0 0 1px #C4D6F6"></div>
<div class="btn" style="left:685px;top:421px;width:90px;height:18px"></div>
<div class="a" style="left:730.0px;top:423.69px;width:0;height:13px;"><span class="tcs" style="transform:translateX(-50%) scaleX(0.82)">Visszavét</span></div>
<div class="t" style="left:500px;top:442.69px;transform:scaleX(0.82);">Raktár:</div>
<div class="t" style="left:500px;top:459.69px;transform:scaleX(0.82);">Mozgásnem:</div>
<div class="t" style="left:500px;top:476.69px;transform:scaleX(0.82);">Vevői megrendelés:</div>
<div class="t" style="left:500px;top:493.69px;transform:scaleX(0.82);">Bizonylatszám:</div>
<div class="t" style="left:500px;top:511.69px;transform:scaleX(0.82);">Hivatkozás:</div>
<div class="t" style="left:500px;top:528.69px;transform:scaleX(0.82);">Státusz:</div>
<div class="t" style="left:500px;top:545.69px;transform:scaleX(0.82);">Megjegyzés:</div>
<div class="a" style="left:580px;top:440px;width:196px;height:121px;background:#9A9A9A"></div>
<div class="a" style="left:580px;top:441px;width:196px;height:16px;background:#3D86F5"></div>
<div class="a" style="left:580px;top:458px;width:196px;height:16px;background:#3D86F5"></div>
<div class="a" style="left:580px;top:475px;width:196px;height:16px;background:#3D86F5"></div>
<div class="a" style="left:580px;top:492px;width:196px;height:17px;background:#3D86F5"></div>
<div class="a" style="left:580px;top:510px;width:196px;height:17px;background:#3D86F5"></div>
<div class="a" style="left:580px;top:527px;width:196px;height:16px;background:#fff"></div>
<div class="a" style="left:580px;top:544px;width:196px;height:17px;background:#3D86F5"></div>
<div class="a" style="left:658px;top:441px;width:1px;height:33px;background:#9A9A9A"></div>
<div class="a" style="left:719px;top:492px;width:1px;height:17px;background:#9A9A9A"></div>
<div class="t w" style="left:583px;top:442.69px;transform:scaleX(0.82);">1</div>
<div class="t w" style="left:661px;top:442.69px;transform:scaleX(0.82);">Nagy raktár</div>
<div class="t w" style="left:583px;top:459.69px;transform:scaleX(0.82);">100</div>
<div class="t w" style="left:661px;top:459.69px;transform:scaleX(0.82);">Belföldi értékesítés</div>
<div class="t w" style="left:583px;top:476.69px;transform:scaleX(0.82);">8-VMS/2010</div>
<div class="t w" style="left:583px;top:493.69px;transform:scaleX(0.82);">3-KMU-1/2010</div>
<div class="t w" style="left:722px;top:493.69px;transform:scaleX(0.82);">3</div>
<div class="t" style="left:582px;top:528.69px;transform:scaleX(0.82);">Normál</div>
<div class="a" style="left:762px;top:528px;width:13px;height:14px;border-radius:2px;background:linear-gradient(#DCE6FC,#B4C8F6);border:1px solid #BCD0F6"></div>
<svg class="a" style="left:764px;top:532px" width="9" height="7" viewBox="0 0 9 7"><path d="M1 1.5 L4.5 5 L8 1.5" fill="none" stroke="#4D6185" stroke-width="1.8"/></svg>
<div class="a" style="left:776px;top:406px;width:3px;height:158px;background:linear-gradient(90deg,rgba(236,233,216,0),#E2E0D6)"></div>
<div class="a" style="left:17px;top:561px;width:762px;height:3px;background:linear-gradient(rgba(236,233,216,0),#E2E0D6)"></div>
<div class="t" style="left:17px;top:568.69px;transform:scaleX(0.82);">-2.0.10 ar1142 E</div>
<div class="a" style="left:87px;top:569px;width:1px;height:12px;background:#C8C5B8"></div>
<div class="t" style="left:92px;top:568.69px;transform:scaleX(0.82);">4 / 4</div>
<div class="a" style="left:161px;top:569px;width:1px;height:12px;background:#D8D5C8"></div>
<div class="a" style="left:166px;top:569px;width:12px;height:12px;border-radius:50%;border:1.6px solid #5580B2;background:linear-gradient(135deg,#FFFFFF,#E4E6EA)"></div>
<div class="a" style="left:187px;top:569px;width:1px;height:12px;background:#D8D5C8"></div>
<div class="t" style="left:191px;top:568.69px;transform:scaleX(0.82);">(*)A telephely vállalaton belüli egyedi neve</div>
<div class="a" style="left:779px;top:579px;width:2px;height:2px;background:#BDBAA8"></div>
<div class="a" style="left:776px;top:579px;width:2px;height:2px;background:#BDBAA8"></div>
<div class="a" style="left:773px;top:579px;width:2px;height:2px;background:#BDBAA8"></div>
<div class="a" style="left:779px;top:576px;width:2px;height:2px;background:#BDBAA8"></div>
<div class="a" style="left:776px;top:576px;width:2px;height:2px;background:#BDBAA8"></div>
<div class="a" style="left:779px;top:573px;width:2px;height:2px;background:#BDBAA8"></div>
<div class="a" style="left:767px;top:571px;width:1px;height:10px;background:#D0CDC0"></div>
</body></html>
